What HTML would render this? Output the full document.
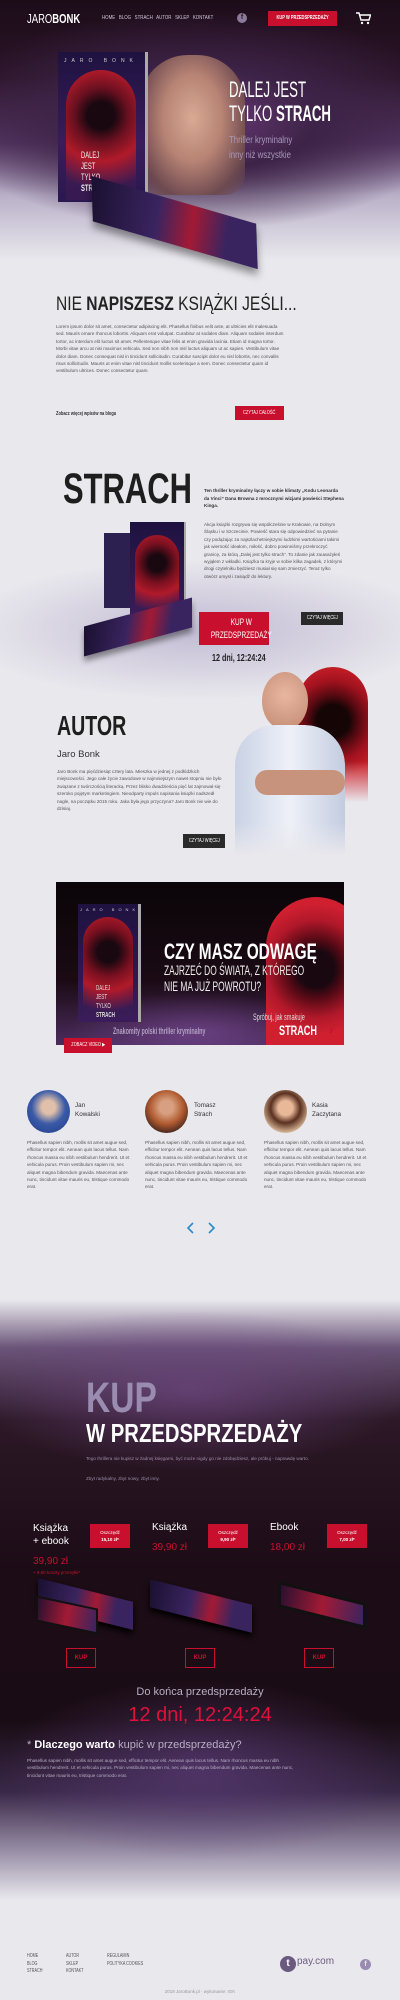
<!DOCTYPE html>
<html><head><meta charset="utf-8">
<style>
*{margin:0;padding:0;box-sizing:border-box}
body{width:400px;height:2000px;position:relative;overflow:hidden;background:#e9e8ed;font-family:"Liberation Sans",sans-serif;color:#333}
.a{position:absolute}
.s{white-space:nowrap;transform-origin:0 0}
.t{font-size:4.6px;line-height:7.4px;color:#555}
.btnr{background:#c8102e;color:#fff;text-align:center}
.btnd{background:#2a2a2a;color:#fff;text-align:center}
.arch{border-radius:999px 999px 0 0}
.in{display:inline-block;white-space:nowrap}
</style></head><body>

<!-- HERO BG -->
<div class="a" style="left:0;top:0;width:400px;height:260px;background:radial-gradient(ellipse 260px 110px at 200px 120px,#6a3a78 0%,#3d2347 45%,rgba(40,20,40,0) 100%),linear-gradient(#1c0c18 0,#2b1428 30%,#5a3a68 55%,#b9b0c8 75%,#e9e8ed 100%)"></div>

<!-- NAV -->
<div class="a s" style="left:27px;top:11px;font-size:13px;color:#fff;transform:scaleX(.73)">JARO<b>BONK</b></div>
<div class="a s" style="left:102px;top:15px;font-size:5.5px;color:#cfc8d8;word-spacing:3px;transform:scaleX(.8)">HOME BLOG STRACH AUTOR SKLEP KONTAKT</div>
<div class="a" style="left:237px;top:13px;width:10px;height:10px;border-radius:50%;background:#8a7a9c;color:#2a1a2a;font-size:7px;font-weight:bold;text-align:center;line-height:10px">f</div>
<div class="a btnr" style="left:268px;top:11px;width:69px;height:15px;font-size:5px;line-height:15px;font-weight:bold;overflow:hidden"><span class="in" style="transform:scaleX(.8)">KUP W PRZEDSPRZEDAŻY</span></div>
<svg class="a" style="left:356px;top:12px" width="15" height="13" viewBox="0 0 15 13"><path d="M0 1h3l2 7h8l1.5-5H4" fill="none" stroke="#fff" stroke-width="1.4"/><circle cx="6" cy="11" r="1.2" fill="#fff"/><circle cx="12" cy="11" r="1.2" fill="#fff"/></svg>

<!-- hero face -->
<div class="a" style="left:140px;top:55px;width:105px;height:140px;border-radius:48px 48px 20px 20px;background:radial-gradient(ellipse at 50% 45%,#d9aa94 0%,#b78374 40%,#6e4a50 75%,rgba(60,40,60,0) 100%)"></div>
<!-- hero standing book -->
<div class="a" style="left:58px;top:52px;width:87px;height:150px;background:linear-gradient(#1e1240,#3a1c5a 60%,#2a1850);box-shadow:3px 0 0 #aaa"></div>
<div class="a arch" style="left:66px;top:70px;width:70px;height:130px;background:radial-gradient(circle at 50% 35%,#1a0810 15%,#6a1020 30%,#b01a2a 50%,rgba(80,30,80,0.3) 80%)"></div>
<div class="a" style="left:64px;top:58px;font-size:5px;color:#ccc;letter-spacing:5px">JARO BONK</div>
<div class="a s" style="left:81px;top:150px;font-size:9px;line-height:11px;color:#eee;transform:scaleX(.65)">DALEJ<br>JEST<br>TYLKO<br><b>STRACH</b></div>
<!-- lying book -->
<div class="a" style="left:92px;top:200px;width:165px;height:45px;background:linear-gradient(100deg,#1a1030,#3a2460 40%,#a21a34 60%,#3a2460 80%);transform:skewY(18deg) rotate(-2deg);box-shadow:0 6px 8px rgba(0,0,0,.4)"></div>
<div class="a s" style="left:229px;top:78px;font-size:22px;line-height:24px;color:#fff;transform:scaleX(.6)">DALEJ JEST<br>TYLKO <b>STRACH</b></div>
<div class="a s" style="left:229px;top:133px;font-size:10px;line-height:15px;color:#a898bc;transform:scaleX(.78)">Thriller kryminalny<br>inny niż wszystkie</div>

<!-- NIE NAPISZESZ -->
<div class="a s" style="left:56px;top:294px;font-size:19px;color:#222;transform:scaleX(.82)">NIE <b>NAPISZESZ</b> KSIĄŻKI JEŚLI...</div>
<div class="a t" style="left:56px;top:323px;width:228px">Lorem ipsum dolor sit amet, consectetur adipiscing elit. Phasellus finibus velit ante, at ultricies elit malesuada sed. Mauris ornare rhoncus lobortis. Aliquam erat volutpat. Curabitur at sodales diam. Aliquam sodales interdum tortor, ac interdum elit luctus sit amet. Pellentesque vitae felis at enim gravida lacinia. Etiam id magna tortor. Morbi vitae arcu at nisi maximus vehicula. Sed non nibh non nisl luctus aliquam ut ac sapien. Vestibulum vitae dolor diam. Donec consequat nisl in tincidunt sollicitudin. Curabitur suscipit dolor eu nisl lobortis, nec convallis risus sollicitudin. Mauris ut enim vitae nisl tincidunt mollis scelerisque a sem. Donec consectetur quam id vestibulum ultrices. Donec consectetur quam.</div>
<div class="a s" style="left:56px;top:411px;font-size:5px;font-weight:bold;color:#333;transform:scaleX(.8)">Zobacz więcej wpisów na blogu</div>
<div class="a btnr" style="left:235px;top:406px;width:49px;height:14px;font-size:5px;line-height:14px"><span class="in" style="transform:scaleX(.8)">CZYTAJ CAŁOŚĆ</span></div>

<!-- STRACH section haze -->
<div class="a" style="left:0;top:440px;width:400px;height:260px;background:radial-gradient(ellipse 240px 70px at 200px 190px,rgba(160,150,190,.55),rgba(233,232,237,0) 100%)"></div>
<div class="a s" style="left:63px;top:465px;font-size:43px;font-weight:bold;color:#1e1e1e;transform:scaleX(.72)">STRACH</div>
<div class="a" style="left:204px;top:487px;width:140px;font-size:4.6px;line-height:7.6px;font-weight:bold;color:#333">Ten thriller kryminalny łączy w sobie klimaty „Kodu Leonarda da Vinci” Dana Browna z mrocznymi wizjami powieści Stephena Kinga.</div>
<div class="a t" style="left:204px;top:521px;width:140px">Akcja książki rozgrywa się współcześnie w Krakowie, na Dolnym Śląsku i w Szczecinie. Powieść stara się odpowiedzieć na pytanie czy podążając za najszlachetniejszymi ludzkimi wartościami takimi jak wierność ideałom, miłość, dobro powinniśmy przekroczyć granicę, za którą „Dalej jest tylko strach”. To zdanie jak zauważyłeś wyjąłem z wkładki. Książka ta kryje w sobie kilka zagadek, z którymi drogi czytelniku będziesz musiał się sam zmierzyć. Teraz tylko otwórz umysł i zasiądź do lektury.</div>
<div class="a" style="left:104px;top:533px;width:30px;height:75px;background:#2c2050"></div>
<div class="a" style="left:130px;top:522px;width:54px;height:95px;background:linear-gradient(#1e1240,#3a1c5a);box-shadow:2px 0 0 #aaa"></div>
<div class="a arch" style="left:135px;top:535px;width:44px;height:80px;background:radial-gradient(circle at 50% 35%,#1a0810 15%,#7a1020 35%,#b01a2a 55%,rgba(60,30,80,.3) 85%)"></div>
<div class="a" style="left:84px;top:612px;width:108px;height:30px;background:linear-gradient(100deg,#1a1030,#3a2460 40%,#a21a34 60%,#3a2460 80%);transform:skewY(-15deg);box-shadow:0 5px 6px rgba(0,0,0,.4)"></div>
<div class="a btnr" style="left:199px;top:612px;width:70px;height:33px;font-size:9px;line-height:13px;padding-top:4px"><span class="in" style="transform:scaleX(.72)">KUP W<br>PRZEDSPRZEDAŻY</span></div>
<div class="a btnd" style="left:301px;top:612px;width:42px;height:13px;font-size:5px;line-height:13px"><span class="in" style="transform:scaleX(.8)">CZYTAJ WIĘCEJ</span></div>
<div class="a s" style="left:212px;top:653px;font-size:10px;font-weight:bold;color:#222;transform:scaleX(.72)">12 dni, 12:24:24</div>

<!-- AUTOR -->
<div class="a arch" style="left:298px;top:667px;width:70px;height:135px;background:radial-gradient(circle at 50% 40%,#150505 18%,#5a0a12 30%,#a0121e 45%,#cc2028 65%);-webkit-mask:linear-gradient(#000 70%,transparent);mask:linear-gradient(#000 70%,transparent)"></div>
<div class="a" style="left:262px;top:672px;width:46px;height:58px;border-radius:50%;background:radial-gradient(circle at 50% 40%,#e8b6a0,#c08870)"></div>
<div class="a" style="left:235px;top:725px;width:110px;height:130px;border-radius:40px 40px 0 0;background:linear-gradient(90deg,#c9d2e4,#eef1f8 50%,#c3cce0);-webkit-mask:linear-gradient(#000 75%,transparent);mask:linear-gradient(#000 75%,transparent)"></div>
<div class="a" style="left:255px;top:770px;width:90px;height:25px;border-radius:12px;background:#c8937c"></div>
<div class="a s" style="left:57px;top:710px;font-size:28px;font-weight:bold;color:#1e1e1e;transform:scaleX(.7)">AUTOR</div>
<div class="a" style="left:57px;top:749px;font-size:9.5px;color:#333">Jaro Bonk</div>
<div class="a t" style="left:57px;top:768px;width:165px">Jaro Bonk ma pięćdziesiąt cztery lata. Mieszka w jednej z podłódzkich miejscowości. Jego całe życie zawodowe w najmniejszym nawet stopniu nie było związane z twórczością literacką. Przez blisko dwadzieścia pięć lat zajmował się szeroko pojętym marketingiem. Nieodparty impuls napisania książki nadszedł nagle, na początku 2015 roku. Jaka była jego przyczyna? Jaro Bonk nie wie do dzisiaj.</div>
<div class="a btnd" style="left:183px;top:834px;width:42px;height:14px;font-size:5px;line-height:14px"><span class="in" style="transform:scaleX(.8)">CZYTAJ WIĘCEJ</span></div>

<!-- BANNER -->
<div class="a" style="left:56px;top:882px;width:288px;height:163px;background:radial-gradient(ellipse 130px 40px at 140px 150px,rgba(130,80,160,.6),rgba(0,0,0,0)),linear-gradient(#0a0508,#1a0a14 60%,#4a2c5c);overflow:hidden">
 <div class="a arch" style="left:210px;top:15px;width:100px;height:160px;background:radial-gradient(circle at 50% 45%,#1a0810 18%,#5a0a16 30%,#b0182a 48%,#d02030 65%)"></div>
 <div class="a" style="left:22px;top:22px;width:60px;height:118px;background:linear-gradient(#1e1240,#3a1c5a);box-shadow:3px 0 0 #aaa"></div>
 <div class="a arch" style="left:27px;top:35px;width:50px;height:100px;background:radial-gradient(circle at 50% 35%,#1a0810 15%,#7a1020 35%,#b01a2a 55%,rgba(60,30,80,.3) 85%)"></div>
 <div class="a" style="left:24px;top:25px;font-size:4px;color:#ccc;letter-spacing:4px">JARO BONK</div>
 <div class="a s" style="left:40px;top:102px;font-size:7px;line-height:9px;color:#ddd;transform:scaleX(.65)">DALEJ<br>JEST<br>TYLKO<br><b>STRACH</b></div>
 <div class="a s" style="left:108px;top:57px;font-size:22px;font-weight:bold;color:#fff;transform:scaleX(.7)">CZY MASZ ODWAGĘ</div>
 <div class="a s" style="left:108px;top:80px;font-size:14px;line-height:16px;color:#eee;transform:scaleX(.6)">ZAJRZEĆ DO ŚWIATA, Z KTÓREGO<br>NIE MA JUŻ POWROTU?</div>
 <div class="a s" style="left:57px;top:144px;font-size:9px;color:#b0a0c0;font-weight:bold;transform:scaleX(.6)">Znakomity polski thriller kryminalny</div>
 <div class="a s" style="left:197px;top:130px;font-size:9px;color:#ddd;transform:scaleX(.62)">Spróbuj, jak smakuje</div>
 <div class="a s" style="left:223px;top:140px;font-size:14px;color:#fff;font-weight:bold;transform:scaleX(.65)">STRACH</div>
 <div class="a" style="left:273px;top:140px;color:#c8102e;font-size:13px;font-weight:bold">›</div>
</div>
<div class="a btnr" style="left:64px;top:1038px;width:48px;height:15px;font-size:5px;line-height:15px"><span class="in" style="transform:scaleX(.8)">ZOBACZ VIDEO ▶</span></div>

<!-- TESTIMONIALS -->
<div class="a" style="left:27px;top:1090px;width:43px;height:43px;border-radius:50%;background:radial-gradient(circle at 50% 40%,#e0c0a8 20%,#3a5aa8 50%,#1e3a88)"></div>
<div class="a" style="left:145px;top:1090px;width:43px;height:43px;border-radius:50%;background:radial-gradient(circle at 50% 40%,#d8a080 20%,#b05a30 50%,#2a1a1a 85%)"></div>
<div class="a" style="left:264px;top:1090px;width:43px;height:43px;border-radius:50%;background:radial-gradient(circle at 50% 42%,#e8b898 22%,#5a3020 45%,#d8b898 75%)"></div>
<div class="a" style="left:75px;top:1101px;font-size:6.3px;line-height:9px;color:#333">Jan<br>Kowalski</div>
<div class="a" style="left:194px;top:1101px;font-size:6.3px;line-height:9px;color:#333">Tomasz<br>Strach</div>
<div class="a" style="left:312px;top:1101px;font-size:6.3px;line-height:9px;color:#333">Kasia<br>Zaczytana</div>
<div class="a t" style="left:27px;top:1139px;width:105px">Phasellus sapien nibh, mollis sit amet augue sed, efficitur tempor elit. Aenean quis lacus tellus. Nam rhoncus massa eu nibh vestibulum hendrerit. Ut et vehicula purus. Proin vestibulum sapien mi, nec aliquet magna bibendum gravida. Maecenas ante nunc, tincidunt vitae mauris eu, tristique commodo erat.</div>
<div class="a t" style="left:145px;top:1139px;width:105px">Phasellus sapien nibh, mollis sit amet augue sed, efficitur tempor elit. Aenean quis lacus tellus. Nam rhoncus massa eu nibh vestibulum hendrerit. Ut et vehicula purus. Proin vestibulum sapien mi, nec aliquet magna bibendum gravida. Maecenas ante nunc, tincidunt vitae mauris eu, tristique commodo erat.</div>
<div class="a t" style="left:264px;top:1139px;width:105px">Phasellus sapien nibh, mollis sit amet augue sed, efficitur tempor elit. Aenean quis lacus tellus. Nam rhoncus massa eu nibh vestibulum hendrerit. Ut et vehicula purus. Proin vestibulum sapien mi, nec aliquet magna bibendum gravida. Maecenas ante nunc, tincidunt vitae mauris eu, tristique commodo erat.</div>
<svg class="a" style="left:186px;top:1222px" width="30" height="12" viewBox="0 0 30 12"><path d="M7 1L2 6l5 5M23 1l5 5-5 5" fill="none" stroke="#2a8ac8" stroke-width="1.6"/></svg>

<!-- DARK SALE -->
<div class="a" style="left:0;top:1300px;width:400px;height:600px;background:radial-gradient(ellipse 220px 80px at 190px 90px,rgba(110,70,130,.7),rgba(0,0,0,0)),radial-gradient(ellipse 200px 90px at 200px 470px,rgba(90,60,120,.7),rgba(0,0,0,0)),linear-gradient(#e9e8ed 0,#6a5478 8%,#2c1826 20%,#1c0c16 45%,#1a0c14 70%,#3a2848 82%,#9a90a8 92%,#e9e8ed 100%)"></div>
<div class="a s" style="left:86px;top:1374px;font-size:43px;font-weight:bold;color:#9a8cb0;transform:scaleX(.78)">KUP</div>
<div class="a s" style="left:86px;top:1418px;font-size:26px;font-weight:bold;color:#fff;transform:scaleX(.78)">W PRZEDSPRZEDAŻY</div>
<div class="a" style="left:86px;top:1455px;width:230px;font-size:4.6px;line-height:7.4px;color:#9a8ca8">Tego thrillera nie kupisz w żadnej księgarni, być może nigdy go nie zdobędziesz, ale próbuj - naprawdę warto.</div>
<div class="a" style="left:86px;top:1476px;font-size:4.6px;color:#9a8ca8">Zbyt radykalny, zbyt nowy, zbyt inny.</div>

<div class="a" style="left:33px;top:1522px;font-size:10px;line-height:13px;color:#fff">Książka<br>+ ebook</div>
<div class="a" style="left:152px;top:1522px;font-size:10px;color:#fff">Książka</div>
<div class="a" style="left:270px;top:1522px;font-size:10px;color:#fff">Ebook</div>
<div class="a btnr" style="left:90px;top:1524px;width:40px;height:24px;font-size:4.5px;line-height:7px;padding-top:5px">Oszczędź<br><b>15,10 zł*</b></div>
<div class="a btnr" style="left:208px;top:1524px;width:40px;height:24px;font-size:4.5px;line-height:7px;padding-top:5px">Oszczędź<br><b>9,90 zł*</b></div>
<div class="a btnr" style="left:327px;top:1524px;width:40px;height:24px;font-size:4.5px;line-height:7px;padding-top:5px">Oszczędź<br><b>7,00 zł*</b></div>
<div class="a" style="left:33px;top:1556px;font-size:10px;color:#c8102e">39,90 zł</div>
<div class="a" style="left:33px;top:1570px;font-size:4.5px;color:#c8102e">+ 9,90 koszty przesyłki*</div>
<div class="a" style="left:152px;top:1542px;font-size:10px;color:#c8102e">39,90 zł</div>
<div class="a" style="left:270px;top:1542px;font-size:10px;color:#c8102e">18,00 zł</div>
<div class="a" style="left:38px;top:1590px;width:95px;height:28px;background:linear-gradient(100deg,#1a1030,#3a2460 40%,#a21a34 60%,#3a2460 80%);transform:skewY(14deg);box-shadow:0 4px 6px #000"></div>
<div class="a" style="left:36px;top:1602px;width:62px;height:26px;border:2px solid #111;background:linear-gradient(100deg,#2a1030,#a21a34 50%,#3a2460);transform:skewY(12deg)"></div>
<div class="a" style="left:150px;top:1592px;width:102px;height:28px;background:linear-gradient(100deg,#1a1030,#3a2460 40%,#a21a34 60%,#3a2460 80%);transform:skewY(14deg);box-shadow:0 4px 6px #000"></div>
<div class="a" style="left:278px;top:1592px;width:88px;height:26px;border:3px solid #111;background:linear-gradient(100deg,#2a1030,#a21a34 50%,#3a2460);transform:skewY(14deg)"></div>
<div class="a" style="left:66px;top:1648px;width:30px;height:20px;border:1px solid #c8102e;color:#c8102e;font-size:6px;line-height:18px;text-align:center;font-weight:bold">KUP</div>
<div class="a" style="left:185px;top:1648px;width:30px;height:20px;border:1px solid #c8102e;color:#c8102e;font-size:6px;line-height:18px;text-align:center;font-weight:bold">KUP</div>
<div class="a" style="left:304px;top:1648px;width:30px;height:20px;border:1px solid #c8102e;color:#c8102e;font-size:6px;line-height:18px;text-align:center;font-weight:bold">KUP</div>
<div class="a" style="left:0;top:1686px;width:400px;text-align:center;font-size:11px;color:#b8aec4">Do końca przedsprzedaży</div>
<div class="a" style="left:0;top:1704px;width:400px;text-align:center;font-size:20px;color:#e0103a">12 dni, 12:24:24</div>
<div class="a" style="left:27px;top:1739px;font-size:11px;color:#b8aec4">* <b style="color:#fff">Dlaczego warto</b> kupić w przedsprzedaży?</div>
<div class="a" style="left:27px;top:1757px;width:275px;font-size:4.6px;line-height:7.4px;color:#b8aec4">Phasellus sapien nibh, mollis sit amet augue sed, efficitur tempor elit. Aenean quis lacus tellus. Nam rhoncus massa eu nibh vestibulum hendrerit. Ut et vehicula purus. Proin vestibulum sapien mi, nec aliquet magna bibendum gravida. Maecenas ante nunc, tincidunt vitae mauris eu, tristique commodo erat.</div>

<!-- FOOTER -->
<div class="a s" style="left:27px;top:1953px;font-size:5px;line-height:7.5px;color:#555;transform:scaleX(.75)">HOME<br>BLOG<br>STRACH</div>
<div class="a s" style="left:66px;top:1953px;font-size:5px;line-height:7.5px;color:#555;transform:scaleX(.75)">AUTOR<br>SKLEP<br>KONTAKT</div>
<div class="a s" style="left:107px;top:1953px;font-size:5px;line-height:7.5px;color:#555;transform:scaleX(.75)">REGULAMIN<br>POLITYKA COOKIES</div>
<div class="a" style="left:280px;top:1956px;width:16px;height:16px;border-radius:50%;background:#6a5a80;color:#fff;font-size:10px;font-weight:bold;text-align:center;line-height:15px">t</div>
<div class="a" style="left:297px;top:1956px;font-size:10px;color:#6a5a80">pay.com</div>
<div class="a" style="left:360px;top:1959px;width:11px;height:11px;border-radius:50%;background:#9a8cb0;color:#e9e8ed;font-size:7px;font-weight:bold;text-align:center;line-height:11px">f</div>
<div class="a" style="left:0;top:1989px;width:400px;text-align:center;font-size:4.5px;color:#999">2018 JaroBonk.pl · wykonanie: IGK</div>
</body></html>
